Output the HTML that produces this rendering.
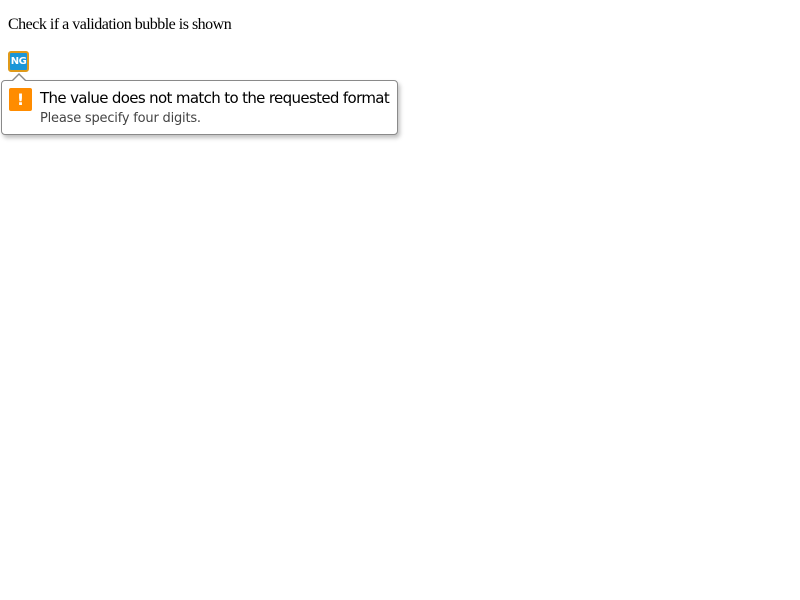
<!DOCTYPE html>
<html><head><style>
body{margin:0;background:#fff;}
.t{position:absolute;left:8px;top:16px;font:16px "Liberation Serif",serif;color:#000;letter-spacing:-0.5px}
.ng{position:absolute;left:8px;top:51px;width:17px;height:17px;border:2px solid #e09a1a;border-radius:3px;background:#1a96d8;color:#fff;font:bold 10px "DejaVu Sans",sans-serif;line-height:17px;text-align:center;letter-spacing:-0.5px}
.b{position:absolute;left:1px;top:80px;width:395px;height:53px;border:1px solid #8a8a8a;border-radius:4px;background:#fff;box-shadow:2px 3px 4px rgba(0,0,0,.25);}
.ar{position:absolute;left:11px;top:73px;width:0;height:0;border-left:8px solid transparent;border-right:8px solid transparent;border-bottom:8px solid #8a8a8a;}
.ar2{position:absolute;left:12px;top:75px;width:0;height:0;border-left:7px solid transparent;border-right:7px solid transparent;border-bottom:7px solid #fff;z-index:2}
.ic{position:absolute;left:7px;top:7px;width:23px;height:23px;background:#ff8c00;border-radius:2px;color:#fff;font:bold 16px "DejaVu Sans",sans-serif;text-align:center;line-height:23px;}
.m{position:absolute;left:38px;top:8px;font:15px "DejaVu Sans",sans-serif;color:#000;white-space:nowrap;letter-spacing:-0.65px}
.s{position:absolute;left:38px;top:30px;font:13px "DejaVu Sans",sans-serif;color:#444;white-space:nowrap;letter-spacing:-0.2px}
</style></head><body>
<div class="t">Check if a validation bubble is shown</div>
<div class="ng">NG</div>
<div class="ar"></div><div class="ar2"></div>
<div class="b"><div class="ic">!</div><div class="m">The value does not match to the requested format</div><div class="s">Please specify four digits.</div></div>
</body></html>
